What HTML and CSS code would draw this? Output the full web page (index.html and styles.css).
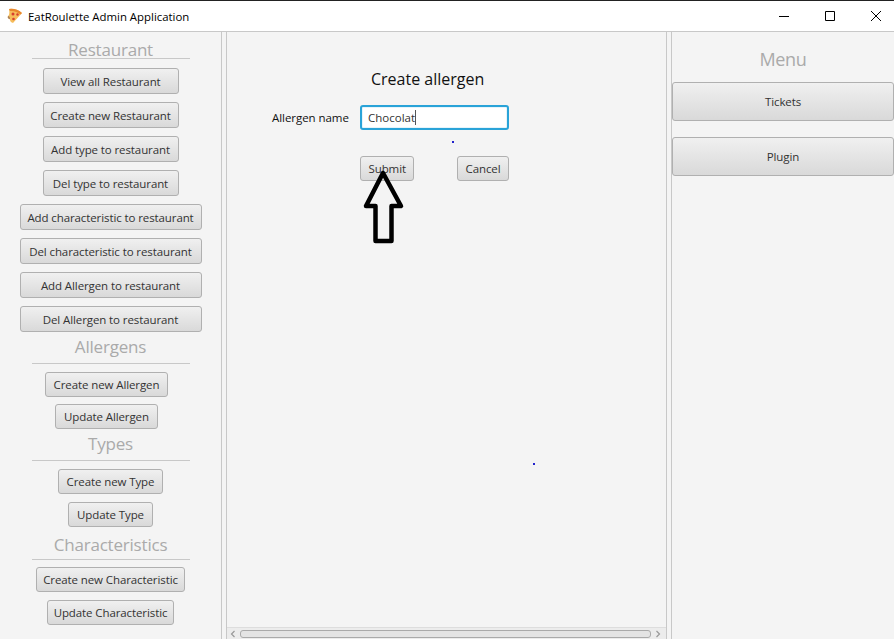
FILE: index.html
```html
<!DOCTYPE html>
<html lang="en">
<head>
    <meta charset="UTF-8">
    <meta name="viewport" content="width=device-width, initial-scale=1.0">
    <title>EatRoulette Admin Application</title>
    <link rel="stylesheet" href="styles.css">
</head>

<body>
    <header class="titlebar">
        <svg class="app_icon" width="16" height="16" viewBox="0 0 16 16">
            <path d="M2 1 Q9 0 15 5 L6 15 Q3 14 2.5 11 Q0 10 1 8 Q3 7 2 1 Z" fill="#f6bd5c"/>
            <path d="M2 1 Q9 0 15 5 L13.5 6.5 Q9 2.5 3 3 Z" fill="#e8872e"/>
            <path d="M1 8 Q3 8 3 11 L2 11 Q0 10 1 8 Z" fill="#a9805a"/>
            <circle cx="6" cy="6" r="1.5" fill="#d8402f"/>
            <circle cx="10.5" cy="6.5" r="1.2" fill="#d8402f"/>
            <circle cx="6.5" cy="11" r="1.3" fill="#d8402f"/>
        </svg>
        <span class="app_title">EatRoulette Admin Application</span>
        <div class="win_controls">
            <svg width="12" height="12" viewBox="0 0 12 12"><path d="M1 6.5H11" stroke="#000" fill="none"/></svg>
            <svg width="12" height="12" viewBox="0 0 12 12"><path d="M1.5 1.5H10.5V10.5H1.5Z" stroke="#000" fill="none"/></svg>
            <svg width="12" height="12" viewBox="0 0 12 12"><path d="M1 1L11 11M11 1L1 11" stroke="#000" fill="none"/></svg>
        </div>
    </header>

    <main class="app">
        <aside class="sidebar">
            <section class="group group_wide">
                <h2 class="group_title title_first">Restaurant</h2>
                <button class="btn btn_md">View all Restaurant</button>
                <button class="btn btn_md">Create new Restaurant</button>
                <button class="btn btn_md">Add type to restaurant</button>
                <button class="btn btn_md">Del type to restaurant</button>
                <button class="btn btn_lg">Add characteristic to restaurant</button>
                <button class="btn btn_lg">Del characteristic to restaurant</button>
                <button class="btn btn_lg">Add Allergen to restaurant</button>
                <button class="btn btn_lg">Del Allergen to restaurant</button>
            </section>
            <section class="group group_tight">
                <h2 class="group_title">Allergens</h2>
                <button class="btn btn_left">Create new Allergen</button>
                <button class="btn btn_left">Update Allergen</button>
            </section>
            <section class="group">
                <h2 class="group_title">Types</h2>
                <button class="btn">Create new Type</button>
                <button class="btn">Update Type</button>
            </section>
            <section class="group">
                <h2 class="group_title title_last">Characteristics</h2>
                <button class="btn btn_char">Create new Characteristic</button>
                <button class="btn btn_char">Update Characteristic</button>
            </section>
        </aside>

        <section class="center">
            <div class="center_scroll">
                <h1 class="form_title">Create allergen</h1>
                <div class="form_row">
                    <label class="form_label" for="allergen">Allergen name</label>
                    <div class="form_field">
                        <input class="form_input" id="allergen" type="text" value="Chocolat">
                        <span class="caret"></span>
                    </div>
                </div>
                <div class="form_actions">
                    <button class="btn btn_form">Submit</button>
                    <button class="btn btn_form">Cancel</button>
                </div>
            </div>
            <div class="hscroll">
                <svg width="8" height="8" viewBox="0 0 8 8"><path d="M5.5 1L2.5 4L5.5 7" stroke="#999" stroke-width="1.2" fill="none"/></svg>
                <div class="hscroll_thumb"></div>
                <svg width="8" height="8" viewBox="0 0 8 8"><path d="M2.5 1L5.5 4L2.5 7" stroke="#999" stroke-width="1.2" fill="none"/></svg>
            </div>
        </section>

        <aside class="menu">
            <h2 class="menu_title">Menu</h2>
            <button class="btn menu_btn">Tickets</button>
            <button class="btn menu_btn">Plugin</button>
        </aside>
    </main>

    <!-- hand drawn arrow and stray dots on top of the screenshot -->
    <svg class="arrow" width="44" height="78" viewBox="0 0 44 78">
        <path d="M21 5L39 38H29.5V73H13.5V38H4Z" fill="none" stroke="#000" stroke-width="4.5" stroke-linejoin="round"/>
    </svg>
    <span class="dot dot_one"></span>
    <span class="dot dot_two"></span>
</body>
</html>
```

FILE: styles.css
```css
* {
    box-sizing: border-box;
}

body {
    margin: 0;
    height: 100vh;
    overflow: hidden;
    display: flex;
    flex-direction: column;
    background-color: #f4f4f4;
    font-family: "Open Sans", "Noto Sans", sans-serif;
    font-size: 11.5px;
    color: #333;
}

.titlebar {
    height: 32px;
    flex: none;
    display: flex;
    align-items: center;
    padding-left: 7px;
    background-color: #fff;
    border-top: 1px solid #222;
    border-bottom: 1px solid #c8c8c8;
}

.app_title {
    margin-left: 5px;
    font-size: 11.4px;
    color: #000;
}

.win_controls {
    margin-left: auto;
    display: flex;
    gap: 34px;
    padding-right: 12px;
}

.app {
    flex: 1;
    min-height: 0;
    display: flex;
}

.sidebar {
    width: 222px;
    flex: none;
    border-right: 1px solid #c8c8c8;
    display: flex;
    flex-direction: column;
    align-items: center;
}

.group {
    display: flex;
    flex-direction: column;
    align-items: center;
    gap: 8px;
}

.group_tight {
    gap: 7px;
}

.group_wide .btn {
    height: 26px;
}

.group_title {
    width: 158px;
    margin: 0;
    padding: 7px 0 8px;
    border-bottom: 1px solid #c8c8c8;
    font-size: 17px;
    font-weight: 400;
    letter-spacing: -0.2px;
    line-height: 16px;
    text-align: center;
    color: #aaa;
}

.group_tight .group_title {
    margin-bottom: 1px;
}

.title_first {
    margin-bottom: 1px;
    padding: 10px 0 0;
}

.title_last {
    margin-bottom: -1px;
    padding: 10px 0 6px;
}

.btn {
    height: 25px;
    padding: 0 8px;
    border: 1px solid #b0b0b0;
    border-radius: 3px;
    background-image: linear-gradient(#f0f0f0, #d9d9d9);
    font-family: inherit;
    font-size: 11.5px;
    letter-spacing: -0.1px;
    white-space: nowrap;
    color: #333;
}

.btn_md {
    width: 136px;
    padding: 0;
}

.btn_lg {
    width: 182px;
    padding: 0;
}

.btn_left {
    margin-right: 8px;
}

.btn_char {
    padding: 0 6px;
}

.btn_form {
    padding: 0 7.5px;
}

.center {
    flex: 1;
    min-width: 0;
    margin-left: 4px;
    border-left: 1px solid #c8c8c8;
    border-right: 1px solid #c8c8c8;
    display: flex;
    flex-direction: column;
}

.center_scroll {
    flex: 1;
    padding-left: 44px;
}

.form_title {
    margin: 35px 0 0 100px;
    font-size: 16px;
    font-weight: 400;
    line-height: 24px;
    color: #111;
}

.form_row {
    margin-top: 14px;
    display: flex;
    align-items: center;
}

.form_label {
    width: 88px;
    margin-left: 1px;
    font-size: 11.5px;
    letter-spacing: -0.05px;
    color: #111;
}

.form_field {
    position: relative;
}

.form_input {
    display: block;
    width: 149px;
    height: 25px;
    padding: 0 6px;
    border: 2px solid #29a3d8;
    border-radius: 3px;
    box-shadow: inset 0 0 0 1px #e6f4fa;
    font-family: inherit;
    font-size: 11.5px;
    color: #333;
    outline: none;
}

.caret {
    position: absolute;
    left: 55px;
    top: 5px;
    width: 1px;
    height: 15px;
    background-color: #555;
}

.form_actions {
    width: 149px;
    margin: 26px 0 0 89px;
    display: flex;
    justify-content: space-between;
}

.hscroll {
    height: 12px;
    flex: none;
    display: flex;
    align-items: center;
    gap: 3px;
    padding: 0 4px 0 2px;
    background-color: #ececec;
    border-top: 1px solid #ddd;
}

.hscroll_thumb {
    flex: 1;
    height: 8px;
    border: 1px solid #aaa;
    border-radius: 3px;
    background-color: #e4e4e4;
}

.menu {
    width: 223px;
    flex: none;
    margin-left: 4px;
    border-left: 1px solid #c8c8c8;
}

.menu_title {
    margin: 16px 0 12px;
    font-size: 18px;
    font-weight: 400;
    letter-spacing: -0.3px;
    line-height: 22px;
    text-align: center;
    color: #aaa;
}

.menu_btn {
    display: block;
    width: 100%;
    height: 39px;
    margin-bottom: 16px;
}

.arrow {
    position: absolute;
    left: 362px;
    top: 168px;
}

.dot {
    position: absolute;
    width: 2px;
    height: 2px;
    background-color: #2222cc;
}

.dot_one {
    left: 452px;
    top: 141px;
}

.dot_two {
    left: 533px;
    top: 463px;
}
```
